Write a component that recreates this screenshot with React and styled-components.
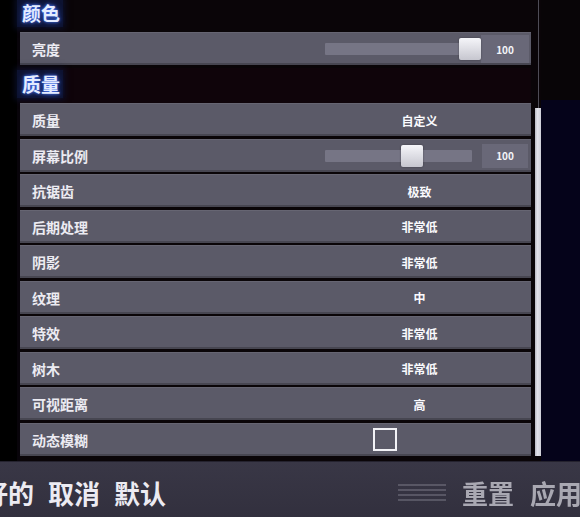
import React from "react";
import styled, { createGlobalStyle } from "styled-components";

const GlobalStyle = createGlobalStyle`
  html, body { margin: 0; padding: 0; background: #0a0508; }
  body { font-family: "Noto Sans CJK SC", "Noto Sans", sans-serif; }
`;

const Page = styled.div`
  width: 580px;
  height: 517px;
  overflow: hidden;
  display: flex;
  flex-direction: column;
  background: #0a0508;
`;

const Main = styled.div`
  height: 461px;
  flex: 0 0 461px;
  display: grid;
  grid-template-columns: 20px 511px 4px 6px 1fr;
  overflow: hidden;
`;

const Gutter = styled.div`
  background: linear-gradient(to right, #000 0 17px, #08040a 17px);
`;

const List = styled.div`
  display: flex;
  flex-direction: column;
  margin-top: -3.5px;
`;

const SectionHeader = styled.div`
  height: 35.5px;
  flex: 0 0 35.5px;
  display: flex;
  align-items: center;
  padding-bottom: 3px;
  box-sizing: border-box;
  background: ${(p) => (p.$tint ? "#0f040a" : "transparent")};
`;

const SectionTitle = styled.span`
  margin-left: -3px;
  padding: 1px 3px 1px 5px;
  font-size: 19px;
  font-weight: 700;
  line-height: 26px;
  color: #e4ecff;
  background: rgba(14, 22, 56, 0.85);
  box-shadow: 0 0 6px 2px rgba(14, 22, 56, 0.7);
  text-shadow: 0 0 3px #4d7dff, 0 0 6px #2c50c4;
`;

const Row = styled.div`
  height: 33px;
  flex: 0 0 33px;
  margin-bottom: 2.5px;
  display: grid;
  grid-template-columns: 290px 1fr;
  align-items: center;
  background: #5b5a68;
  border-top: 1px solid rgba(255, 255, 255, 0.07);
  box-shadow: inset 0 -2px 0 rgba(0, 0, 0, 0.22);
  box-sizing: border-box;
`;

const Label = styled.span`
  padding-left: 12px;
  font-size: 14px;
  font-weight: 700;
  color: #ecebf2;
`;

const Control = styled.div`
  height: 100%;
  display: flex;
  align-items: center;
  justify-content: ${(p) => (p.$center ? "center" : "flex-start")};
  padding-left: ${(p) => p.$pad || 0}px;
  padding-right: 2px;
  box-sizing: border-box;
`;

const Value = styled.span`
  font-size: 12px;
  font-weight: 700;
  color: #fafafe;
`;

const Track = styled.div`
  position: relative;
  width: ${(p) => p.$w}px;
  height: 12px;
  background: #767585;
  border-radius: 1px;
`;

const Thumb = styled.div`
  position: absolute;
  top: 50%;
  transform: translateY(-50%);
  width: 22px;
  height: 22px;
  background: linear-gradient(#f5f5f9, #c6c6cf);
  border-radius: 2px;
  box-shadow: 0 0 2px rgba(0, 0, 0, 0.4);
`;

const ValueBox = styled.div`
  width: ${(p) => p.$w}px;
  height: ${(p) => p.$h}px;
  margin-left: ${(p) => p.$ml}px;
  display: flex;
  align-items: center;
  justify-content: center;
  background: #696878;
  font-size: 10px;
  font-weight: 700;
  color: #f4f4f8;
`;

const Checkbox = styled.div`
  width: 24px;
  height: 23px;
  box-sizing: border-box;
  border: 2px solid #f2f2f6;
`;

const ScrollCol = styled.div`
  display: flex;
  flex-direction: column;
  align-items: stretch;
`;

const ScrollLine = styled.div`
  flex: 0 0 108px;
  width: 1px;
  margin-left: 3px;
  background: #4e4c56;
`;

const ScrollThumb = styled.div`
  flex: 0 0 348px;
  background: linear-gradient(to right, #b9b9c2, #e2e2ea 40%, #cfcfd8);
`;

const RightFill = styled.div`
  background: linear-gradient(to bottom, #080507 0 100px, #05031a 100px);
`;

const BottomBar = styled.div`
  flex: 1;
  display: flex;
  align-items: center;
  justify-content: space-between;
  padding-top: 6px;
  box-sizing: border-box;
  background: linear-gradient(#393746, #32303e);
  border-top: 1px solid #24222e;
`;

const Actions = styled.div`
  display: flex;
  gap: 14px;
  margin-left: -18px;
`;

const ActionText = styled.span`
  font-size: 26px;
  font-weight: 700;
  color: ${(p) => (p.$dim ? "#a9a8b2" : "#ecebf2")};
  line-height: 32px;
  white-space: nowrap;
  filter: ${(p) => (p.$dim ? "blur(0.5px)" : "none")};
`;

const RightActions = styled.div`
  display: flex;
  align-items: center;
  gap: 16px;
  margin-right: -2px;
`;

const rows = [
  { label: "质量", value: "自定义" },
  { label: "屏幕比例", slider: { track: 147, thumb: 76, box: 46, boxH: 24, ml: 10 } },
  { label: "抗锯齿", value: "极致" },
  { label: "后期处理", value: "非常低" },
  { label: "阴影", value: "非常低" },
  { label: "纹理", value: "中" },
  { label: "特效", value: "非常低" },
  { label: "树木", value: "非常低" },
  { label: "可视距离", value: "高" },
  { label: "动态模糊", checkbox: true },
];

function SettingRow({ label, value, slider, checkbox }) {
  let control;
  if (slider) {
    control = (
      <Control $pad={15}>
        <Track $w={slider.track}>
          <Thumb style={{ left: slider.thumb }} />
        </Track>
        <ValueBox $w={slider.box} $h={slider.boxH} $ml={slider.ml}>100</ValueBox>
      </Control>
    );
  } else if (checkbox) {
    control = (
      <Control $pad={63}>
        <Checkbox />
      </Control>
    );
  } else {
    control = (
      <Control $center>
        <Value>{value}</Value>
      </Control>
    );
  }
  return (
    <Row>
      <Label>{label}</Label>
      {control}
    </Row>
  );
}

export default function App() {
  return (
    <>
      <GlobalStyle />
      <Page>
        <Main>
          <Gutter />
          <List>
            <SectionHeader>
              <SectionTitle>颜色</SectionTitle>
            </SectionHeader>
            <SettingRow label="亮度" slider={{ track: 156, thumb: 134, box: 48, boxH: 28, ml: 0 }} />
            <SectionHeader $tint>
              <SectionTitle>质量</SectionTitle>
            </SectionHeader>
            {rows.map((r) => (
              <SettingRow key={r.label} {...r} />
            ))}
          </List>
          <div />
          <ScrollCol>
            <ScrollLine />
            <ScrollThumb />
          </ScrollCol>
          <RightFill />
        </Main>
        <BottomBar>
          <Actions>
            <ActionText>好的</ActionText>
            <ActionText>取消</ActionText>
            <ActionText>默认</ActionText>
          </Actions>
          <RightActions>
            <svg width="48" height="22" viewBox="0 0 48 22" style={{ opacity: 0.35 }}>
              <rect x="0" y="2" width="48" height="2" fill="#9a99a6" />
              <rect x="0" y="7" width="48" height="2" fill="#9a99a6" />
              <rect x="0" y="12" width="48" height="2" fill="#9a99a6" />
              <rect x="0" y="17" width="48" height="2" fill="#9a99a6" />
            </svg>
            <ActionText $dim>重置</ActionText>
            <ActionText $dim>应用</ActionText>
          </RightActions>
        </BottomBar>
      </Page>
    </>
  );
}
